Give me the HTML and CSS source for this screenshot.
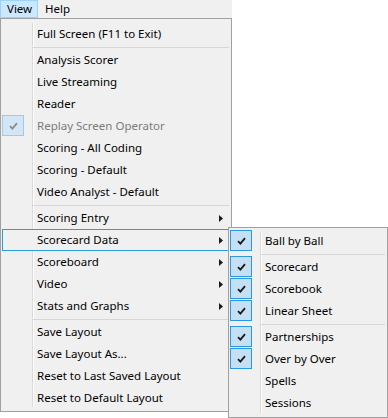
FILE: index.html
```html
<!DOCTYPE html>
<html>
<head>
<meta charset="utf-8">
<link rel="stylesheet" href="styles.css">
</head>
<body>
<div class="menubar">
  <span class="mb-item active">View</span>
  <span class="mb-item">Help</span>
</div>
<div class="menu main">
  <div class="item"><span class="chk"></span><span class="label">Full Screen (F11 to Exit)</span></div>
  <div class="sep"></div>
  <div class="item"><span class="chk"></span><span class="label">Analysis Scorer</span></div>
  <div class="item"><span class="chk"></span><span class="label">Live Streaming</span></div>
  <div class="item"><span class="chk"></span><span class="label">Reader</span></div>
  <div class="item disabled"><span class="chk on"><svg width="9" height="8" viewBox="0 0 9 8"><path d="M1 4.2 L3.4 6.6 L8 1.2" fill="none" stroke="currentColor" stroke-width="1.8"/></svg></span><span class="label">Replay Screen Operator</span></div>
  <div class="item"><span class="chk"></span><span class="label">Scoring - All Coding</span></div>
  <div class="item"><span class="chk"></span><span class="label">Scoring - Default</span></div>
  <div class="item"><span class="chk"></span><span class="label">Video Analyst - Default</span></div>
  <div class="sep"></div>
  <div class="item"><span class="chk"></span><span class="label">Scoring Entry</span><svg class="arrow" width="4" height="7" viewBox="0 0 4 7"><polygon points="0,0 4,3.5 0,7"/></svg></div>
  <div class="item hover"><span class="chk"></span><span class="label">Scorecard Data</span><svg class="arrow" width="4" height="7" viewBox="0 0 4 7"><polygon points="0,0 4,3.5 0,7"/></svg></div>
  <div class="item"><span class="chk"></span><span class="label">Scoreboard</span><svg class="arrow" width="4" height="7" viewBox="0 0 4 7"><polygon points="0,0 4,3.5 0,7"/></svg></div>
  <div class="item"><span class="chk"></span><span class="label">Video</span><svg class="arrow" width="4" height="7" viewBox="0 0 4 7"><polygon points="0,0 4,3.5 0,7"/></svg></div>
  <div class="item"><span class="chk"></span><span class="label">Stats and Graphs</span><svg class="arrow" width="4" height="7" viewBox="0 0 4 7"><polygon points="0,0 4,3.5 0,7"/></svg></div>
  <div class="sep"></div>
  <div class="item"><span class="chk"></span><span class="label">Save Layout</span></div>
  <div class="item"><span class="chk"></span><span class="label">Save Layout As...</span></div>
  <div class="item"><span class="chk"></span><span class="label">Reset to Last Saved Layout</span></div>
  <div class="item"><span class="chk"></span><span class="label">Reset to Default Layout</span></div>
</div>
<div class="menu sub">
  <div class="item"><span class="chk on"><svg width="9" height="8" viewBox="0 0 9 8"><path d="M1 4.2 L3.4 6.6 L8 1.2" fill="none" stroke="currentColor" stroke-width="1.8"/></svg></span><span class="label">Ball by Ball</span></div>
  <div class="sep"></div>
  <div class="item"><span class="chk on"><svg width="9" height="8" viewBox="0 0 9 8"><path d="M1 4.2 L3.4 6.6 L8 1.2" fill="none" stroke="currentColor" stroke-width="1.8"/></svg></span><span class="label">Scorecard</span></div>
  <div class="item"><span class="chk on"><svg width="9" height="8" viewBox="0 0 9 8"><path d="M1 4.2 L3.4 6.6 L8 1.2" fill="none" stroke="currentColor" stroke-width="1.8"/></svg></span><span class="label">Scorebook</span></div>
  <div class="item"><span class="chk on"><svg width="9" height="8" viewBox="0 0 9 8"><path d="M1 4.2 L3.4 6.6 L8 1.2" fill="none" stroke="currentColor" stroke-width="1.8"/></svg></span><span class="label">Linear Sheet</span></div>
  <div class="sep"></div>
  <div class="item"><span class="chk on"><svg width="9" height="8" viewBox="0 0 9 8"><path d="M1 4.2 L3.4 6.6 L8 1.2" fill="none" stroke="currentColor" stroke-width="1.8"/></svg></span><span class="label">Partnerships</span></div>
  <div class="item"><span class="chk on"><svg width="9" height="8" viewBox="0 0 9 8"><path d="M1 4.2 L3.4 6.6 L8 1.2" fill="none" stroke="currentColor" stroke-width="1.8"/></svg></span><span class="label">Over by Over</span></div>
  <div class="item"><span class="chk"></span><span class="label">Spells</span></div>
  <div class="item"><span class="chk"></span><span class="label">Sessions</span></div>
</div>
</body>
</html>
```

FILE: styles.css
```css
html, body {
  margin: 0;
  padding: 0;
  background: #ffffff;
}
body {
  font-family: "Noto Sans", "Open Sans", sans-serif;
  font-size: 11.5px;
  color: #000000;
  position: relative;
  width: 388px;
  height: 418px;
  overflow: hidden;
}
.menubar {
  display: flex;
  width: 232px;
  height: 18px;
  background: #f0f0f0;
  box-sizing: border-box;
}
.mb-item {
  height: 18px;
  line-height: 16px;
  padding: 0 6px;
  border: 1px solid transparent;
  box-sizing: border-box;
}
.mb-item.active {
  background: #cce8ff;
  border-color: #99d1ff;
  padding: 0 6px 0 6px;
  width: 38px;
}
.menu {
  box-sizing: border-box;
  border: 1px solid #a0a0a0;
  background-color: #f0f0f0;
  background-image: linear-gradient(to right, #d9d9d9 0 1px, #ffffff 1px 2px);
  background-repeat: no-repeat;
  background-size: 2px calc(100% - 8px);
  background-position: 31px 4px;
  display: flex;
  flex-direction: column;
}
.main {
  width: 232px;
  padding: 4px 2px 2px 1px;
}
.sub {
  position: absolute;
  left: 228px;
  top: 227px;
  width: 160px;
  padding: 2px 2px 3px 1px;
}
.item {
  display: flex;
  align-items: center;
  height: 22px;
  box-sizing: border-box;
  border: 1px solid transparent;
  white-space: nowrap;
}
.item.hover {
  border-color: #26a0da;
  background: #f0f0f0;
}
.chk {
  width: 22px;
  height: 21px;
  box-sizing: border-box;
  flex: none;
  align-self: flex-start;
  margin: -1px 0 0 -1px;
  display: flex;
  align-items: center;
  justify-content: center;
  color: #1a1a1a;
}
.chk.on {
  border: 1px solid #2b98e0;
  background: #c5e0f4;
}
.disabled .chk.on {
  border-color: #9fcbeb;
  background: #d3e6f5;
  color: #8c8c8c;
}
.label {
  flex: 1;
  padding-left: 13px;
  line-height: 20px;
}
.disabled .label {
  color: #7c7c7c;
}
.arrow {
  flex: none;
  margin-right: 5px;
  fill: #1a1a1a;
}
.sep {
  height: 4px;
  margin-left: 31px;
  background: linear-gradient(#d7d7d7, #d7d7d7) no-repeat 0 2px / 100% 1px;
}
```
